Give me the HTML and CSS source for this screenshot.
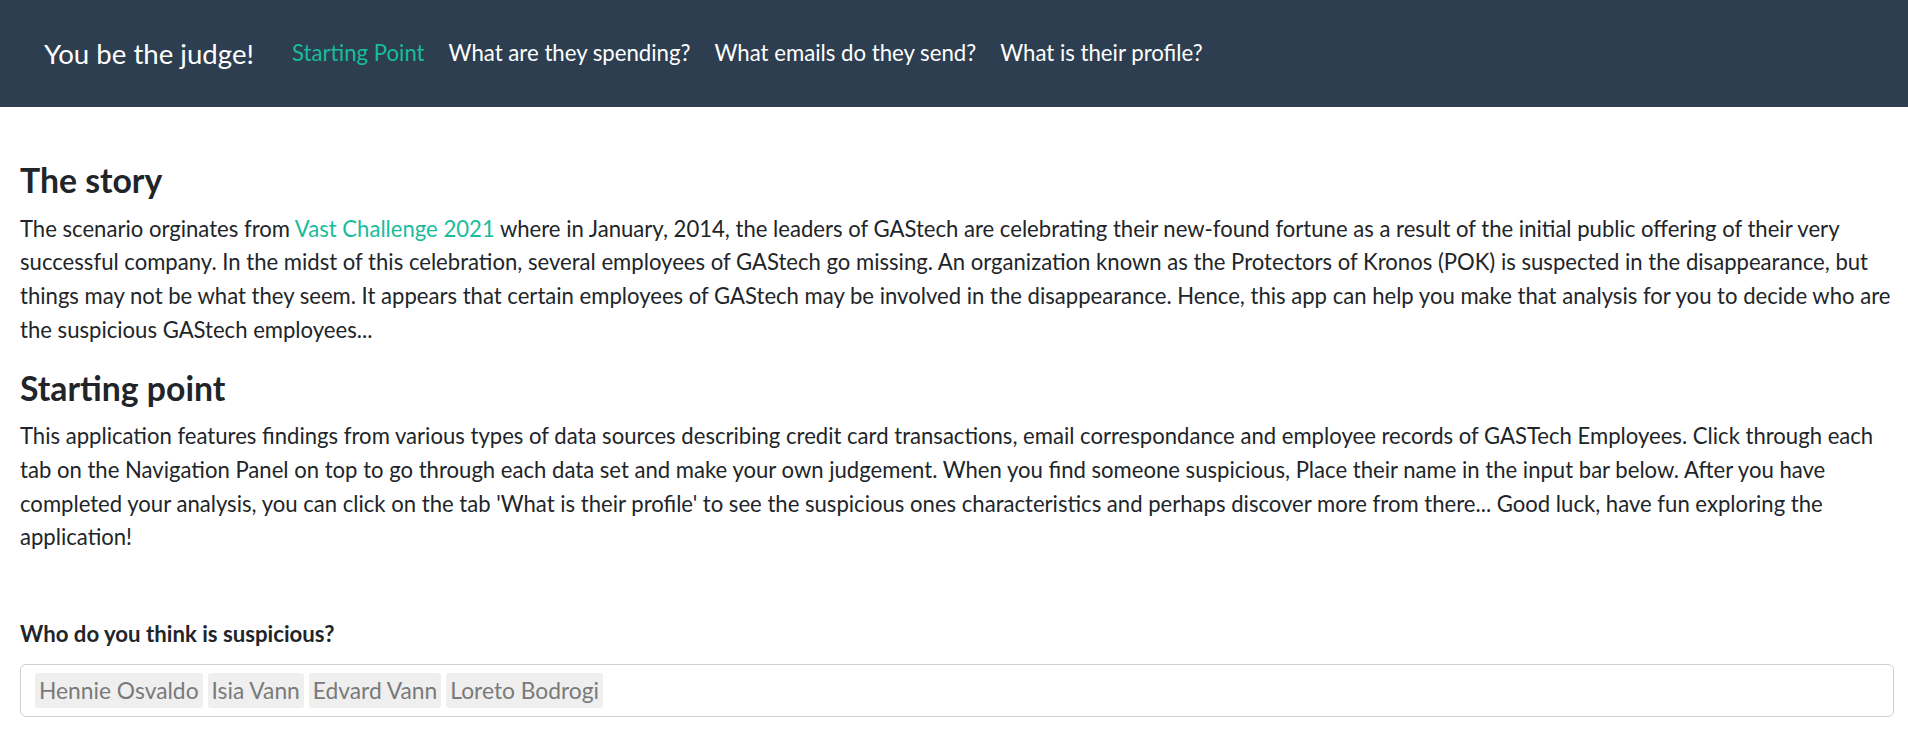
FILE: index.html
```html
<!DOCTYPE html>
<html lang="en">
<head>
<meta charset="utf-8">
<title>You be the judge!</title>
<link rel="stylesheet" href="styles.css">
</head>
<body>
<nav class="navbar">
  <span class="brand">You be the judge!</span>
  <ul class="nav">
    <li><a class="nav-link active" href="#">Starting Point</a></li>
    <li><a class="nav-link" href="#">What are they spending?</a></li>
    <li><a class="nav-link" href="#">What emails do they send?</a></li>
    <li><a class="nav-link" href="#">What is their profile?</a></li>
  </ul>
</nav>
<main class="content">
  <h3 class="heading">The story</h3>
  <p class="text">The scenario orginates from <a class="link" href="#">Vast Challenge 2021</a> where in January, 2014, the leaders of GAStech are celebrating their new-found fortune as a result of the initial public offering of their very successful company. In the midst of this celebration, several employees of GAStech go missing. An organization known as the Protectors of Kronos (POK) is suspected in the disappearance, but things may not be what they seem. It appears that certain employees of GAStech may be involved in the disappearance. Hence, this app can help you make that analysis for you to decide who are the suspicious GAStech employees...</p>
  <h3 class="heading">Starting point</h3>
  <p class="text">This application features findings from various types of data sources describing credit card transactions, email correspondance and employee records of GASTech Employees. Click through each tab on the Navigation Panel on top to go through each data set and make your own judgement. When you find someone suspicious, Place their name in the input bar below. After you have completed your analysis, you can click on the tab 'What is their profile' to see the suspicious ones characteristics and perhaps discover more from there... Good luck, have fun exploring the application!</p>
  <div class="form-group">
    <label class="label">Who do you think is suspicious?</label>
    <div class="select-box">
      <span class="item">Hennie Osvaldo</span>
      <span class="item">Isia Vann</span>
      <span class="item">Edvard Vann</span>
      <span class="item">Loreto Bodrogi</span>
    </div>
  </div>
</main>
</body>
</html>
```
FILE: styles.css
```css
* { box-sizing: border-box; }
html, body {
  margin: 0;
  padding: 0;
  background: #ffffff;
}
body {
  font-family: Lato, "Open Sans", "Liberation Sans", sans-serif;
  font-size: 22.1px;
  line-height: 33.75px;
  color: #212529;
}
.navbar {
  height: 107px;
  background: #2c3e50;
  display: flex;
  align-items: center;
  padding: 0 0 0 44px;
}
.brand {
  font-size: 27.6px;
  color: #ffffff;
  margin-right: 26px;
  line-height: 1.2;
}
.nav {
  list-style: none;
  margin: 0;
  padding: 0;
  display: flex;
  align-items: center;
}
.nav-link {
  display: block;
  padding: 0 12px;
  font-size: 22.2px;
  color: #ffffff;
  text-decoration: none;
  line-height: 1.2;
}
.nav-link.active { color: #18bc9c; }
.content {
  padding: 53px 14px 0 20px;
}
.heading {
  font-size: 33.75px;
  font-weight: 700;
  line-height: 1.2;
  margin: 0 0 11px;
  color: #212529;
}
.text {
  margin: 0 0 21px;
}
.link {
  color: #18bc9c;
  text-decoration: none;
}
.form-group {
  padding-top: 42px;
}
.label {
  display: block;
  font-weight: 700;
  font-size: 22.2px;
  margin-bottom: 13px;
}
.select-box {
  height: 53px;
  border: 1px solid #cfcfcf;
  border-radius: 6px;
  padding: 8px 14px;
  display: flex;
  align-items: center;
  gap: 5px;
}
.item {
  background: #efefef;
  color: #7a7a7a;
  font-size: 22.8px;
  line-height: 35px;
  height: 35px;
  padding: 0 4px;
  border-radius: 3px;
}
```
